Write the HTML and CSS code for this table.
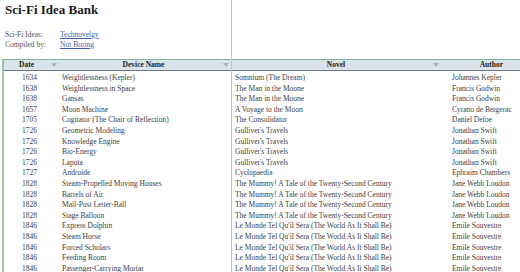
FILE: index.html
```html
<!DOCTYPE html>
<html>
<head>
<meta charset="utf-8">
<link rel="stylesheet" href="styles.css">
</head>
<body>
<div class="sheet">
  <div class="top">
    <h1 class="title">Sci-Fi Idea Bank</h1>
    <div class="meta">
      <span class="label">Sci-Fi Ideas:</span><a class="link">Technovelgy</a>
      <span class="label">Compiled by:</span><a class="link">Not Boring</a>
    </div>
  </div>
  <div class="table">
    <div class="row head">
      <div class="hc c-date"><span class="ht">Date</span><span class="filt"></span></div>
      <div class="hc c-dev"><span class="ht">Device Name</span><span class="filt"></span></div>
      <div class="hc c-nov"><span class="ht">Novel</span><span class="filt"></span></div>
      <div class="hc c-auth"><span class="ht">Author</span></div>
    </div>
    <div class="row"><div class="c-date">1634</div><div class="c-dev">Weightlessness (Kepler)</div><div class="c-nov">Somnium (The Dream)</div><div class="c-auth">Johannes Kepler</div></div>
    <div class="row"><div class="c-date">1638</div><div class="c-dev">Weightlessness in Space</div><div class="c-nov">The Man in the Moone</div><div class="c-auth">Francis Godwin</div></div>
    <div class="row"><div class="c-date">1638</div><div class="c-dev">Gansas</div><div class="c-nov">The Man in the Moone</div><div class="c-auth">Francis Godwin</div></div>
    <div class="row"><div class="c-date">1657</div><div class="c-dev">Moon Machine</div><div class="c-nov">A Voyage to the Moon</div><div class="c-auth">Cyrano de Bergerac</div></div>
    <div class="row"><div class="c-date">1705</div><div class="c-dev">Cogitator (The Chair of Reflection)</div><div class="c-nov">The Consolidator</div><div class="c-auth">Daniel Defoe</div></div>
    <div class="row"><div class="c-date">1726</div><div class="c-dev">Geometric Modeling</div><div class="c-nov">Gulliver's Travels</div><div class="c-auth">Jonathan Swift</div></div>
    <div class="row"><div class="c-date">1726</div><div class="c-dev">Knowledge Engine</div><div class="c-nov">Gulliver's Travels</div><div class="c-auth">Jonathan Swift</div></div>
    <div class="row"><div class="c-date">1726</div><div class="c-dev">Bio-Energy</div><div class="c-nov">Gulliver's Travels</div><div class="c-auth">Jonathan Swift</div></div>
    <div class="row"><div class="c-date">1726</div><div class="c-dev">Laputa</div><div class="c-nov">Gulliver's Travels</div><div class="c-auth">Jonathan Swift</div></div>
    <div class="row"><div class="c-date">1727</div><div class="c-dev">Androide</div><div class="c-nov">Cyclopaedia</div><div class="c-auth">Ephraim Chambers</div></div>
    <div class="row"><div class="c-date">1828</div><div class="c-dev">Steam-Propelled Moving Houses</div><div class="c-nov">The Mummy! A Tale of the Twenty-Second Century</div><div class="c-auth">Jane Webb Loudon</div></div>
    <div class="row"><div class="c-date">1828</div><div class="c-dev">Barrels of Air</div><div class="c-nov">The Mummy! A Tale of the Twenty-Second Century</div><div class="c-auth">Jane Webb Loudon</div></div>
    <div class="row"><div class="c-date">1828</div><div class="c-dev">Mail-Post Letter-Ball</div><div class="c-nov">The Mummy! A Tale of the Twenty-Second Century</div><div class="c-auth">Jane Webb Loudon</div></div>
    <div class="row"><div class="c-date">1828</div><div class="c-dev">Stage Balloon</div><div class="c-nov">The Mummy! A Tale of the Twenty-Second Century</div><div class="c-auth">Jane Webb Loudon</div></div>
    <div class="row"><div class="c-date">1846</div><div class="c-dev">Express Dolphin</div><div class="c-nov">Le Monde Tel Qu'il Sera (The World As It Shall Be)</div><div class="c-auth">Emile Souvestre</div></div>
    <div class="row"><div class="c-date">1846</div><div class="c-dev">Steam Horse</div><div class="c-nov">Le Monde Tel Qu'il Sera (The World As It Shall Be)</div><div class="c-auth">Emile Souvestre</div></div>
    <div class="row"><div class="c-date">1846</div><div class="c-dev">Forced Scholars</div><div class="c-nov">Le Monde Tel Qu'il Sera (The World As It Shall Be)</div><div class="c-auth">Emile Souvestre</div></div>
    <div class="row"><div class="c-date">1846</div><div class="c-dev">Feeding Room</div><div class="c-nov">Le Monde Tel Qu'il Sera (The World As It Shall Be)</div><div class="c-auth">Emile Souvestre</div></div>
    <div class="row"><div class="c-date">1846</div><div class="c-dev">Passenger-Carrying Mortar</div><div class="c-nov">Le Monde Tel Qu'il Sera (The World As It Shall Be)</div><div class="c-auth">Emile Souvestre</div></div>
  </div>
  <div class="freeze"></div>
</div>
</body>
</html>
```
FILE: styles.css
```css
html, body {
  margin: 0;
  padding: 0;
  background: #fff;
}
body {
  width: 520px;
  height: 272px;
  overflow: hidden;
  font-family: "Liberation Serif", "DejaVu Serif", serif;
  color: #404040;
}
.sheet {
  position: relative;
  width: 520px;
  height: 272px;
  overflow: hidden;
}
.top {
  height: 59px;
  padding-left: 5px;
  box-sizing: border-box;
}
.title {
  margin: 0;
  padding-top: 2px;
  font-size: 13px;
  line-height: 16px;
  font-weight: bold;
  color: #1a1a1a;
}
.meta {
  margin-top: 12px;
  display: grid;
  grid-template-columns: 55px auto;
  font-size: 7.5px;
  line-height: 9.5px;
  color: #555;
}
.link {
  color: #3f5fae;
  text-decoration: underline;
  justify-self: start;
}
.table {
  margin-left: 2px;
  border-top: 1px solid #7fb899;
  border-left: 2px solid #9cc8a8;
  height: 220px;
}
.row {
  display: grid;
  grid-template-columns: 57px 172px 218px 69px;
  height: 10.6px;
  font-size: 7.5px;
  line-height: 10.6px;
  white-space: nowrap;
}
.row > div {
  overflow: hidden;
}
.head {
  height: 10px;
  line-height: 10px;
  background: #dae3ea;
  border-bottom: 1px solid #6b7a85;
  margin-bottom: 2px;
  font-weight: bold;
  color: #222;
}
.hc {
  position: relative;
  text-align: center;
}
.head .c-date { padding-right: 12px; text-align: center; }
.head .c-dev { padding-right: 8px; }
.head .c-nov { padding-right: 14px; }
.head .c-auth { text-align: right; padding-right: 17px; }
.filt {
  position: absolute;
  top: 3px;
  width: 0;
  height: 0;
  border-left: 3px solid transparent;
  border-right: 3px solid transparent;
  border-top: 4px solid #a8b2ba;
}
.c-date .filt { left: 47px; }
.c-dev .filt { left: 162px; }
.c-nov .filt { left: 200px; }
.c-date {
  text-align: right;
  padding-right: 24px;
}
.c-dev {
  padding-left: 1px;
}
.c-nov {
  padding-left: 2px;
}
.c-auth {
  padding-left: 1px;
}
.freeze {
  position: absolute;
  left: 231px;
  top: 0;
  width: 1px;
  height: 272px;
  background: #c4c4c4;
}
```
